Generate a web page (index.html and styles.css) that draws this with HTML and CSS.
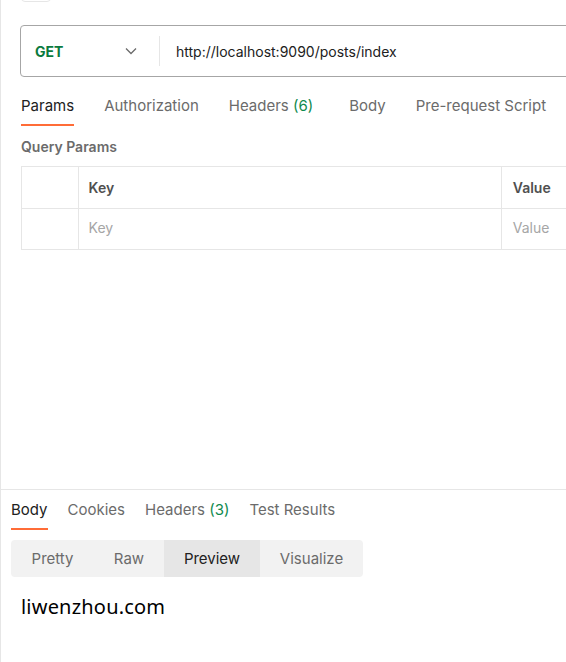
FILE: index.html
```html
<!DOCTYPE html>
<html>
<head>
<meta charset="utf-8">
<link rel="stylesheet" href="styles.css">
</head>
<body>
<div class="app">
  <div class="top-stub"></div>
  <div class="request">
    <div class="urlbar">
      <div class="method">
        <span class="method-name">GET</span>
        <svg class="chev" width="12" height="8" viewBox="0 0 12 8"><path d="M1 1.5 L6 6.5 L11 1.5" fill="none" stroke="#6b6b6b" stroke-width="1.3"/></svg>
      </div>
      <div class="sep"></div>
      <div class="url">http://localhost:9090/posts/index</div>
    </div>
    <div class="tabs">
      <div class="tab active">Params</div>
      <div class="tab">Authorization</div>
      <div class="tab wide">Headers <span class="count">(6)</span></div>
      <div class="tab">Body</div>
      <div class="tab">Pre-request Script</div>
    </div>
    <div class="section-title">Query Params</div>
    <div class="table">
      <div class="row head">
        <div class="cell check"></div>
        <div class="cell key">Key</div>
        <div class="cell val">Value</div>
      </div>
      <div class="row">
        <div class="cell check"></div>
        <div class="cell key ph">Key</div>
        <div class="cell val ph">Value</div>
      </div>
    </div>
  </div>
  <div class="response">
    <div class="tabs rtabs">
      <div class="tab active">Body</div>
      <div class="tab">Cookies</div>
      <div class="tab">Headers <span class="count">(3)</span></div>
      <div class="tab">Test Results</div>
    </div>
    <div class="seg">
      <div class="seg-item s1">Pretty</div>
      <div class="seg-item s2">Raw</div>
      <div class="seg-item s3 selected">Preview</div>
      <div class="seg-item s4">Visualize</div>
    </div>
    <div class="preview">liwenzhou.com</div>
  </div>
</div>
</body>
</html>
```
FILE: styles.css
```css
* { box-sizing: border-box; }
html, body { margin: 0; padding: 0; background: #fff; }
body { font-family: Inter, "Noto Sans", sans-serif; font-size: 14px; color: #212121; overflow: hidden; }
.app { width: 566px; height: 662px; border-left: 1px solid #e6e6e6; display: flex; flex-direction: column; overflow: hidden; position: relative; }
.top-stub { position: absolute; left: 20px; top: -10px; width: 30px; height: 12px; border: 1px solid #e6e6e6; border-radius: 4px; }
.request { padding: 25px 0 0 19px; height: 490px; flex: none; border-bottom: 1px solid #e6e6e6; overflow: hidden; }
.urlbar { display: flex; align-items: center; height: 52px; width: 600px; border: 1px solid #a6a6a6; border-radius: 4px; }
.method { display: flex; align-items: center; justify-content: space-between; width: 138px; padding: 0 22px 0 14px; }
.method-name { color: #0b7a3e; font-weight: 700; font-size: 14px; }
.chev { display: block; }
.sep { width: 1px; height: 30px; background: #e6e6e6; }
.url { padding-left: 16px; font-size: 14px; color: #212121; }
.tabs { display: flex; margin-top: 17px; height: 32px; padding-left: 1px; }
.tab { color: #6b6b6b; font-size: 15px; line-height: 24px; height: 32px; margin-right: 30px; border-bottom: 2px solid transparent; padding-top: 0; white-space: nowrap; }
.tab.wide { margin-right: 36px; }
.tab.active { color: #212121; border-bottom-color: #ff6c37; }
.count { color: #0f8a4e; }
.section-title { margin-top: 11px; padding-left: 1px; font-weight: 600; color: #6b6b6b; font-size: 14px; line-height: 20px; }
.table { margin-top: 9px; width: 600px; border-top: 1px solid #e6e6e6; border-left: 1px solid #e6e6e6; margin-left: 1px; }
.row { display: flex; height: 42px; border-bottom: 1px solid #e6e6e6; }
.row:last-child { height: 41px; }
.cell { display: flex; align-items: center; padding-left: 10px; border-right: 1px solid #e6e6e6; font-size: 14px; }
.cell.check { width: 57px; padding: 0; }
.cell.key { width: 426px; }
.cell.val { width: 120px; border-right: none; padding-left: 11px; }
.row:last-child .cell { padding-bottom: 3px; }
.head .cell { font-weight: 600; color: #505050; }
.ph { color: #a6a6a6; }
.response { padding: 0 0 0 10px; }
.rtabs { margin-top: 0; height: 40px; padding-left: 0; }
.rtabs .tab { margin-right: 20px; height: 40px; line-height: 24px; padding-top: 8px; }
.seg { display: flex; margin-top: 10px; width: 352px; height: 37px; background: #f2f2f2; border-radius: 4px; overflow: hidden; }
.seg-item { display: flex; align-items: center; justify-content: center; color: #6b6b6b; font-size: 15px; }
.seg-item.selected { background: #e6e6e6; color: #212121; }
.s1 { width: 83px; }
.s2 { width: 70px; }
.s3 { width: 96px; }
.s4 { width: 103px; }
.preview { margin-top: 16px; padding-left: 10px; font-family: "Noto Sans", "Open Sans", sans-serif; font-size: 20px; letter-spacing: 0.2px; color: #000; }
```
